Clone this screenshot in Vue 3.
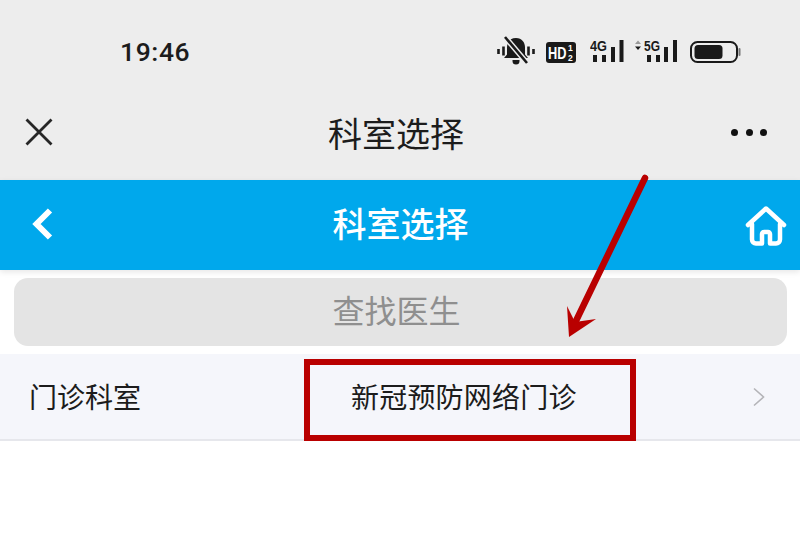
<template>
  <div class="page">
    <div class="top">
      <div class="status">
        <span class="time">19:46</span>
        <div class="status-icons">
          <svg class="ic-bell" width="38" height="30" viewBox="0 0 38 30">
            <path d="M1.500 13v5M6.500 10.500v9M31.500 10.500v9M36.500 13v5" stroke="#1a1a1a" stroke-width="2.600" fill="none" />
            <path d="M19 2c-6 0-9 4.500-9 9.500v7l-3 3.500h24l-3-3.500v-7c0-5-3-9.500-9-9.500z" fill="#1a1a1a" />
            <path d="M15.500 24h7v1a3.500 3.500 0 0 1-7 0z" fill="#1a1a1a" />
            <path d="M8 1l22 26" stroke="#ededed" stroke-width="5.500" fill="none" />
            <path d="M8 1l22 26" stroke="#1a1a1a" stroke-width="2.600" fill="none" />
          </svg>
          <svg class="ic-hd" width="30" height="21" viewBox="0 0 30 21">
            <rect width="30" height="21" rx="3" fill="#1a1a1a" />
            <text transform="translate(2 16.500) scale(0.8 1)" class="hd">HD</text>
            <text x="22" y="9" class="hd-small">1</text>
            <text x="22" y="19" class="hd-small">2</text>
          </svg>
          <svg class="ic-net ic-4g" width="34" height="28" viewBox="0 -4 34 28">
            <text transform="translate(0 12) scale(0.85 1)" class="net">4G</text>
            <path d="M3 16h4v7H3zM12 16h4v7h-4zM21 8h4v15h-4zM29.500 1h4v22h-4z" fill="#1a1a1a" />
          </svg>
          <svg class="ic-net ic-5g" width="46" height="28" viewBox="0 -4 46 28">
            <path d="M2 5l3-3.500L8 5z" fill="#9a9a9a" />
            <path d="M2 7.500h6L5 11z" fill="#1a1a1a" />
            <text transform="translate(11 12) scale(0.8 1)" class="net">5G</text>
            <path d="M14 16h4v7h-4zM23 16h4v7h-4zM31 8h4v15h-4zM40 1h4v22h-4z" fill="#1a1a1a" />
          </svg>
          <svg class="ic-battery" width="51" height="22" viewBox="0 0 51 22">
            <rect x="1" y="1" width="46" height="20" rx="6.500" fill="none" stroke="#1a1a1a" stroke-width="2" />
            <rect x="4.500" y="4" width="28" height="14" rx="3.500" fill="#1a1a1a" />
            <rect x="48.500" y="7" width="2" height="8" rx="1" fill="#777" />
          </svg>
        </div>
      </div>
      <div class="nav">
        <svg class="nav-close" width="28" height="28" viewBox="0 0 28 28">
          <path d="M1.500 1.500l25 25M26.500 1.500l-25 25" stroke="#262626" stroke-width="2.800" fill="none" />
        </svg>
        <span class="nav-title">科室选择</span>
        <div class="dots"><i></i><i></i><i></i></div>
      </div>
    </div>

    <div class="blue">
      <svg class="blue-back" width="26" height="34" viewBox="0 0 26 34">
        <path d="M20 3.500L6.500 17 20 30.500" stroke="#fff" stroke-width="6" fill="none" />
      </svg>
      <span class="blue-title">科室选择</span>
      <svg class="blue-home" width="42" height="42" viewBox="0 0 42 42">
        <path d="M3 20L21 3.500 39 20" stroke="#fff" stroke-width="4.500" stroke-linecap="round" stroke-linejoin="round" fill="none" />
        <path d="M7 19v15.500a4 4 0 0 0 4 4h6V29a2 2 0 0 1 2-2h4a2 2 0 0 1 2 2v9.500h6a4 4 0 0 0 4-4V19" stroke="#fff" stroke-width="4.500" stroke-linecap="round" stroke-linejoin="round" fill="none" />
      </svg>
    </div>

    <div class="search">查找医生</div>

    <div class="row">
      <span class="row-label">门诊科室</span>
      <span class="row-value">新冠预防网络门诊</span>
      <svg class="row-arrow" width="12" height="20" viewBox="0 0 12 20">
        <path d="M1 1.500L10.500 10 1 18.500" stroke="#b4b4b8" stroke-width="1.600" fill="none" />
      </svg>
    </div>

    <div class="mark-box"></div>
    <svg class="mark-arrow" width="800" height="544" viewBox="0 0 800 544">
      <path d="M645 178L574 325" stroke="#b90000" stroke-width="6.500" stroke-linecap="round" fill="none" />
      <path d="M569 337L567 306 575 322 596 319z" fill="#b90000" />
    </svg>
  </div>
</template>

<script setup>
</script>

<style scoped>
.page {
  position: relative;
  width: 800px;
  height: 544px;
  overflow: hidden;
  background: #fff;
  font-family: "Noto Sans CJK SC", "Liberation Sans", sans-serif;
}

.top {
  background: #ededed;
  height: 180px;
}

.status {
  height: 92px;
  padding: 10px 59px 0 120px;
  box-sizing: border-box;
  display: flex;
  align-items: center;
}

.time {
  font-family: Roboto, "Liberation Sans", sans-serif;
  font-size: 26.5px;
  font-weight: 500;
  letter-spacing: 0.6px;
  color: #1c1c1c;
}

.status-icons {
  margin-left: auto;
  margin-top: 2px;
  display: flex;
  align-items: center;
}

.ic-bell { margin-top: -2px; }
.ic-hd { margin-left: 11px; }
.ic-net { margin-top: -6px; }
.ic-4g { margin-left: 14px; }
.ic-5g { margin-left: 9px; }
.ic-battery { margin-left: 11px; }

.hd {
  font: 700 16px "Liberation Sans", sans-serif;
  fill: #fff;
}

.hd-small {
  font: 700 8.5px "Liberation Sans", sans-serif;
  fill: #fff;
}

.net {
  font: 700 15px "Liberation Sans", sans-serif;
  fill: #1a1a1a;
}

.nav {
  height: 88px;
  box-sizing: border-box;
  padding: 0 33px 6px 25px;
  display: flex;
  align-items: center;
  justify-content: space-between;
}

.nav-close {
  margin-right: 8px;
  margin-bottom: 2px;
}

.nav-title {
  font-size: 34px;
  line-height: 1;
  color: #1c1c1c;
}

.dots {
  display: flex;
  gap: 7.500px;
  margin-bottom: 2px;
}

.dots i {
  width: 7px;
  height: 7px;
  border-radius: 50%;
  background: #111;
}

.blue {
  height: 90px;
  box-sizing: border-box;
  padding: 0 13px 4px 30px;
  display: flex;
  align-items: center;
  justify-content: space-between;
  background: #00a8ec;
  box-shadow: 0 2px 6px rgba(0, 0, 0, 0.1);
  position: relative;
}

.blue-title {
  font-size: 34px;
  line-height: 1;
  font-weight: 500;
  color: #fff;
}

.blue-back {
  margin-top: 2px;
}

.blue-home {
  margin-top: 6px;
}

.search {
  margin: 8px 13px 8px 14px;
  height: 68px;
  box-sizing: border-box;
  padding: 0 8px 6px 0;
  border-radius: 14px;
  background: #e4e4e4;
  display: flex;
  align-items: center;
  justify-content: center;
  font-size: 32px;
  color: #8f8f8f;
}

.row {
  height: 85px;
  padding: 0 35px 0 29px;
  display: flex;
  align-items: center;
  background: #f5f6fb;
  border-bottom: 2px solid #e6e7ec;
  font-size: 28px;
  color: #1c1c1c;
}

.row-label,
.row-value {
  margin-bottom: 2px;
}

.row-label {
  width: 322px;
}

.row-value {
  letter-spacing: 0.2px;
}

.row-arrow {
  margin-left: auto;
  margin-top: 1px;
}

.mark-box {
  position: absolute;
  left: 304px;
  top: 359px;
  width: 332px;
  height: 82px;
  box-sizing: border-box;
  border: 6px solid #b90000;
}

.mark-arrow {
  position: absolute;
  left: 0;
  top: 0;
  pointer-events: none;
}
</style>
